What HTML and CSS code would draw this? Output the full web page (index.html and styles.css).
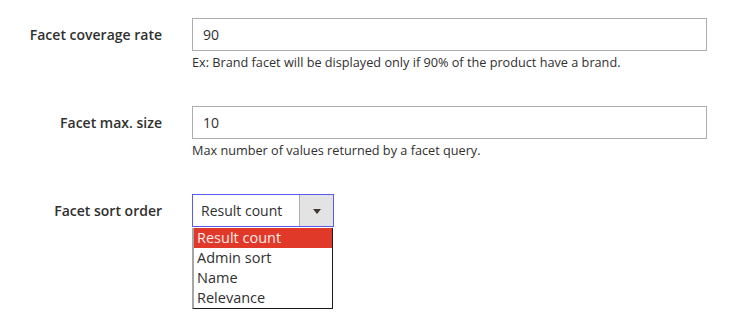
FILE: index.html
```html
<!DOCTYPE html>
<html>
  <head>
    <title>Catalog search - facets</title>
    <meta name="viewport" content="width=device-width, initial-scale=1">
    <link rel="stylesheet" href="styles.css">
  </head>
  <body>
    <div class="fieldset">
      <div class="field">
        <div class="field-label">Facet coverage rate</div>
        <div class="field-control">
          <input type="text" class="input-text" value="90">
          <div class="note">Ex: Brand facet will be displayed only if 90% of the product have a brand.</div>
        </div>
      </div>

      <div class="field">
        <div class="field-label">Facet max. size</div>
        <div class="field-control">
          <input type="text" class="input-text" value="10">
          <div class="note">Max number of values returned by a facet query.</div>
        </div>
      </div>

      <div class="field">
        <div class="field-label">Facet sort order</div>
        <div class="field-control">
          <div class="select-box">
            <div class="select-value">Result count</div>
            <div class="select-button"><span class="arrow"></span></div>
          </div>
          <!-- open dropdown list -->
          <div class="select-options">
            <div class="option selected">Result count</div>
            <div class="option">Admin sort</div>
            <div class="option">Name</div>
            <div class="option">Relevance</div>
          </div>
        </div>
      </div>
    </div>
  </body>
</html>
```

FILE: styles.css
```css
html {
  height: 100%;
}

body {
  margin: 0;
  padding-top: 18px;
  background: #fff;
  color: #303030;
  font-family: "Open Sans", "Liberation Sans", Arial, sans-serif;
  font-size: 14px;
}

.fieldset {
  display: flex;
  flex-direction: column;
  gap: 35px;
}

.field {
  display: flex;
  align-items: flex-start;
}

.field-label {
  width: 192px;
  padding-right: 30px;
  box-sizing: border-box;
  flex-shrink: 0;
  text-align: right;
  white-space: nowrap;
  font-weight: 600;
  line-height: 33px;
  color: #303030;
}

.field-control {
  width: 515px;
}

.input-text {
  display: block;
  width: 100%;
  height: 33px;
  box-sizing: border-box;
  margin: 0;
  padding: 0 10px;
  border: 1px solid #adadad;
  border-radius: 0;
  font-family: inherit;
  font-size: 14px;
  color: #303030;
  outline: none;
}

.note {
  margin-top: 2px;
  font-size: 12.7px;
  line-height: 18px;
  color: #303030;
}

.select-box {
  display: flex;
  width: 142px;
  height: 33px;
  box-sizing: border-box;
  border: 1px solid #5a5aef;
}

.select-value {
  flex: 1;
  padding-left: 8px;
  line-height: 31px;
  font-size: 14px;
  color: #303030;
}

.select-button {
  width: 33px;
  display: flex;
  align-items: center;
  justify-content: center;
  background: #e3e3e3;
  border-left: 1px solid #adadad;
}

.arrow {
  width: 0;
  height: 0;
  border-left: 4px solid transparent;
  border-right: 4px solid transparent;
  border-top: 5px solid #41362f;
  margin-top: 1px;
}

.select-options {
  width: 141px;
  margin-top: 1px;
  box-sizing: border-box;
  background: #fff;
  border: 1px solid #1a1a1a;
  border-left: 2px solid #a6a6a6;
  border-top: 0;
}

.option {
  height: 20px;
  line-height: 20px;
  padding-left: 3px;
  font-size: 14.5px;
  color: #303030;
}

.option.selected {
  background: #e0392a;
  color: #fbe9e7;
}
```
